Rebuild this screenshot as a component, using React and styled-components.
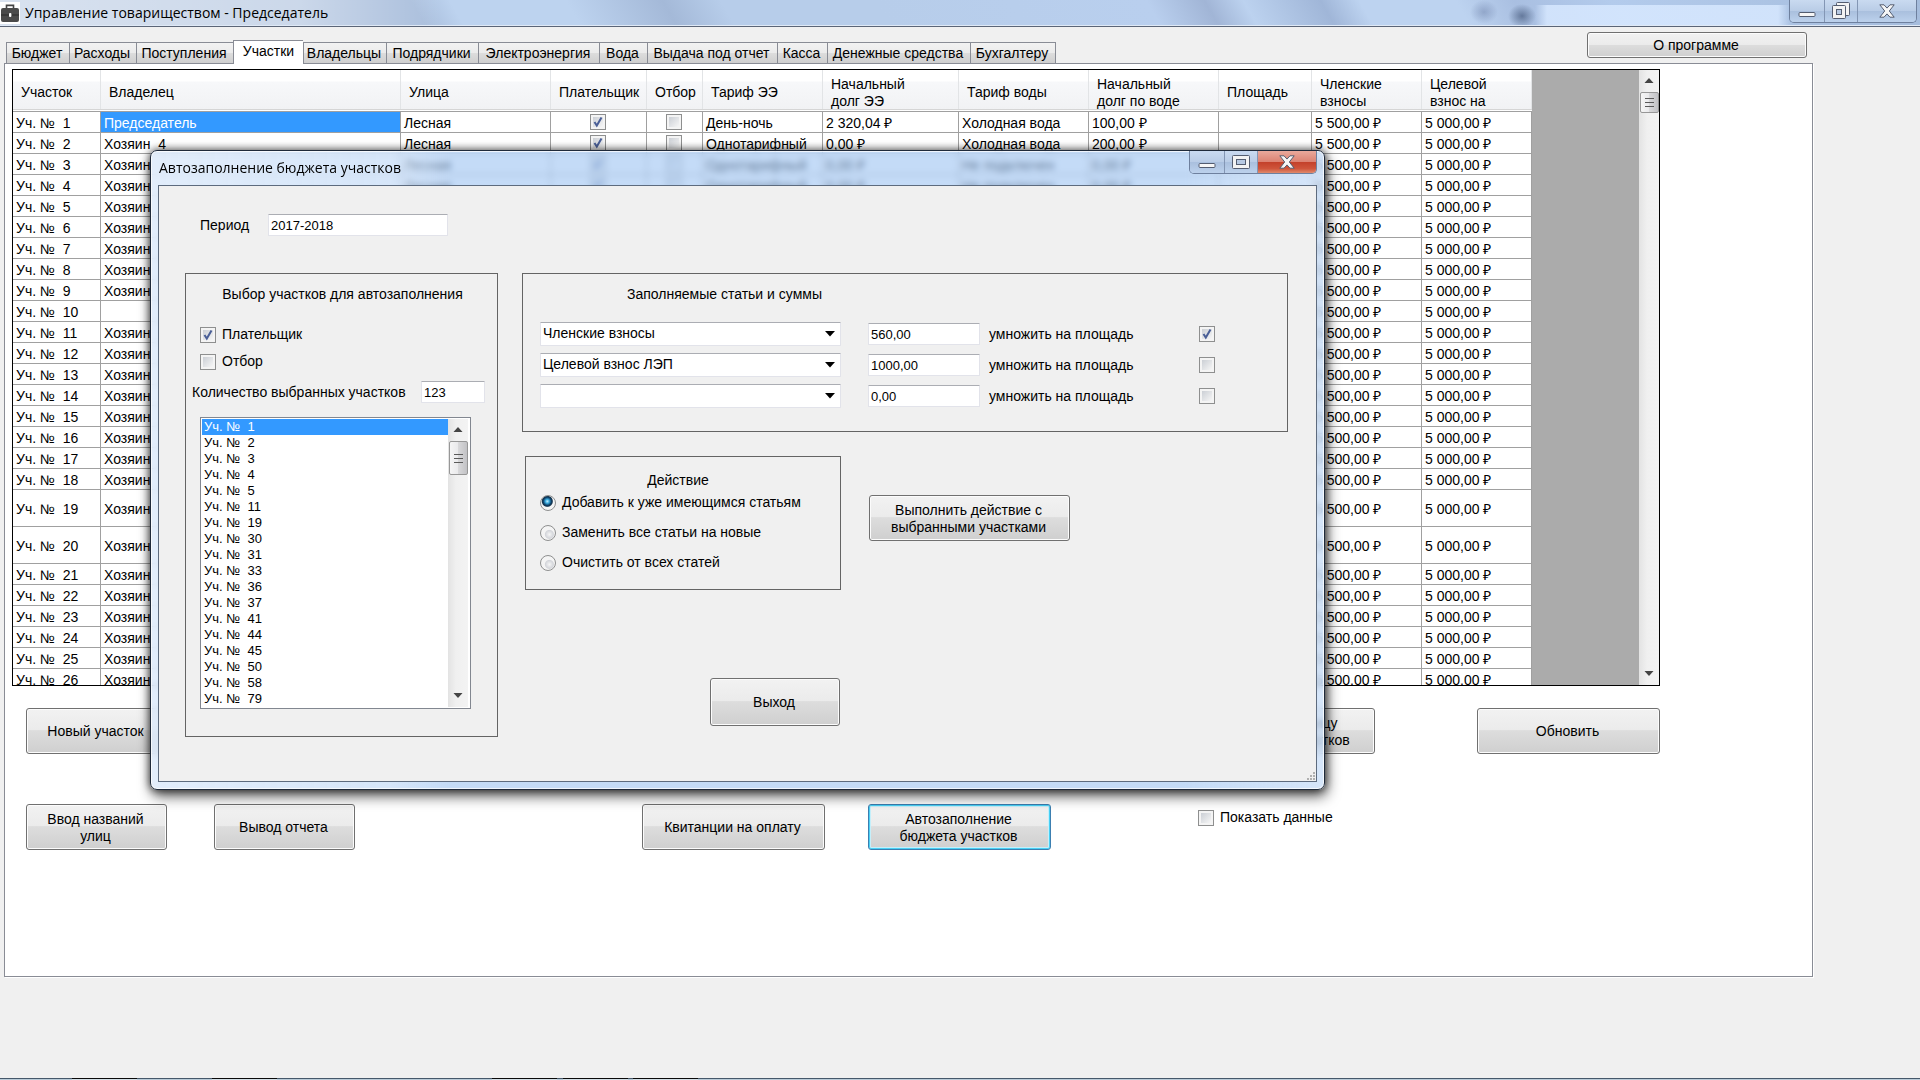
import React from "react";
import styled, { createGlobalStyle, css } from "styled-components";

const ui = '"Liberation Sans", Arial, sans-serif';
const caption = '"Open Sans", "Noto Sans", sans-serif';

const Global = createGlobalStyle`
  *, *::before, *::after { box-sizing: border-box; }
  html, body, #root { height: 100%; }
  body { margin: 0; overflow: hidden; background: #f0f0f0; color: #000; font: 14px/17px ${ui}; }
  button, input, select { font: inherit; color: inherit; margin: 0; }
`;

const Screen = styled.div`
  display: flex;
  flex-direction: column;
  min-height: 100vh;
  position: relative;
`;

const TitleBar = styled.header`
  display: flex;
  align-items: center;
  justify-content: space-between;
  height: 27px;
  border-bottom: 1px solid #5b6577;
  box-shadow: inset 0 -1px 0 #dfe9f6;
  background:
    radial-gradient(ellipse 14px 12px at right 398px top 16px, rgba(55,75,110,.6), transparent),
    radial-gradient(ellipse 14px 12px at right 436px top 12px, rgba(110,130,170,.5), transparent),
    linear-gradient(90deg, transparent, rgba(215,232,255,.85) 12px calc(100% - 12px), transparent) right 130px top 5px / 255px 20px no-repeat,
    linear-gradient(90deg, rgba(255,255,255,.55) 0, rgba(255,255,255,.4) 300px, transparent 440px),
    linear-gradient(60deg, #a9bedc 0 22%, #bdd3ef 24% 30%, #a4b9d8 35%, #b7cdea 38% 46%, #b9cfee 60%, #a1b5d6 63%, #bcd2ef 65%, #a0b6d8 69%, #bdd3f0 71% 76%, #a9bfe1 79%, #b3cbec 84%, #a5bcdc 100%);
`;

const Caption = styled.div`
  display: flex;
  align-items: center;
  gap: 5px;
  height: 26px;
  font: 14px/20px ${caption};
  white-space: nowrap;
`;

const CaptionButtons = styled.div`
  display: flex;
  align-self: flex-start;
  height: 23px;
  margin-right: ${(p) => (p.$dialog ? 0 : 3)}px;
  border: 1px solid #6e809e;
  border-top: 0;
  border-radius: 0 0 5px 5px;
  overflow: hidden;
`;

const CaptionButton = styled.button`
  display: grid;
  place-items: center;
  width: ${(p) => p.$w}px;
  padding: 0;
  border: 0;
  border-right: 1px solid #8396b4;
  background: linear-gradient(#c9daf0, #b9cce6 50%, #a9bfdd 50%, #bcd1ec);
  &:last-child { border-right: 0; }
  ${(p) => p.$danger && css`background: linear-gradient(#e9a99c, #dc8373 48%, #c3402a 50%, #cf553b 80%, #e08a6c);`}
`;

const Toolbar = styled.div`
  display: flex;
  justify-content: space-between;
  align-items: flex-end;
  height: 36px;
  padding-left: 6px;
`;

const Tabs = styled.div`
  display: flex;
  align-items: flex-end;
`;

const Tab = styled.button`
  position: relative;
  width: ${(p) => p.$w}px;
  height: 21px;
  padding: 1px 2px 0 0;
  border: 1px solid #898c95;
  border-width: 1px 0 0 1px;
  background: linear-gradient(#f2f2f2, #ebebeb 50%, #dddddd 50%, #cfcfcf);
  white-space: nowrap;
  &:last-child { border-right-width: 1px; }
  ${(p) => p.$active && css`
    height: 24px;
    margin-bottom: -1px;
    padding: 0 0 2px;
    background: #fff;
  `}
`;

const aero = css`
  border: 1px solid #707070;
  border-radius: 3px;
  background: linear-gradient(#f2f2f2, #ebebeb 48%, #dddddd 49%, #cfcfcf);
  box-shadow: inset 0 0 0 1px #fcfcfc;
`;

const Button = styled.button`
  ${aero}
  flex: none;
  width: ${(p) => p.$w}px;
  height: ${(p) => p.$h || 46}px;
  padding: 1px 2px 0 0;
  white-space: pre-line;
  ${(p) => p.$focused && css`
    border-color: #3c7fb1;
    box-shadow: inset 0 0 0 1px #48d0f5, inset 0 0 0 2px #c5effa;
  `}
`;

const About = styled.div`
  align-self: flex-start;
  padding-top: 5px;
  margin-right: 113px;
`;

const Page = styled.main`
  flex: 1;
  margin: 0 107px 101px 4px;
  padding: 5px 152px 0 7px;
  background: #fff;
  border: 1px solid #898c95;
  box-shadow: 1px 1px 0 #fff;
`;

const Taskbar = styled.footer`
  height: 2px;
  border-top: 1px solid #46586a;
  background: #b9cbd8;
  display: flex;
`;

const TaskItem = styled.span`
  width: 65px;
  height: 2px;
  margin-top: -1px;
  margin-left: ${(p) => p.$gap}px;
  background: linear-gradient(#0a0a0a 50%, #d3dfe6 50%);
`;

const GridBox = styled.div`
  display: flex;
  height: 617px;
  border: 1px solid #000;
  background: #ababab;
`;

const GridView = styled.div`
  flex: 1;
  overflow: hidden;
`;

const Grid = styled.table`
  width: 1519px;
  table-layout: fixed;
  border-collapse: separate;
  border-spacing: 0;
  background: #fff;
`;

const Th = styled.th`
  height: 42px;
  padding: 4px 6px 0 8px;
  border-bottom: 1px solid #a0a0a0;
  background:
    linear-gradient(#e2e4e6, #e2e4e6) right top / 1px 39px no-repeat,
    linear-gradient(#d5d5d5, #d5d5d5) left bottom 1px / 100% 1px no-repeat,
    linear-gradient(#fff 0 11px, #f7f8fa 12px, #f1f2f4 39px, #fff 40px);
  font-weight: 400;
  text-align: left;
  white-space: pre-line;
`;

const Td = styled.td`
  height: ${(p) => (p.$tall ? 37 : 21)}px;
  padding: 3px 3px 0;
  border: 1px solid #a0a0a0;
  border-width: 0 1px 1px 0;
  white-space: pre;
  overflow: hidden;
  ${(p) => p.$center && css`padding: 1px 4px 0 2px; text-align: center;`}
  ${(p) => p.$selected && css`background: #3399ff; color: #fff;`}
`;

const Check = styled.input.attrs({ type: "checkbox" })`
  appearance: none;
  flex: none;
  width: 16px;
  height: 16px;
  vertical-align: top;
  border: 1px solid #8e8f8f;
  background:
    linear-gradient(135deg, #cbcfd5, #f6f6f6) center / 10px 10px no-repeat,
    #f4f4f4;
  &:checked {
    background:
      url("data:image/svg+xml,%3Csvg xmlns='http://www.w3.org/2000/svg' viewBox='0 0 14 14'%3E%3Cpath d='M3.5 7l2.3 3.6L10.5 2.6' fill='none' stroke='%234a5f97' stroke-width='2'/%3E%3C/svg%3E") center / 14px 14px no-repeat,
      linear-gradient(135deg, #cbcfd5, #f6f6f6) center / 10px 10px no-repeat,
      #f4f4f4;
  }
`;

const Radio = styled.input.attrs({ type: "radio" })`
  appearance: none;
  flex: none;
  width: 16px;
  height: 16px;
  border: 1px solid #8e8f8f;
  border-radius: 50%;
  background: radial-gradient(circle at 60% 60%, #f6f6f6 0, #d3d5da 4px, #f4f4f4 5px);
  &:checked {
    background: radial-gradient(circle at 45% 38%, #c5f0ff 0, #38a8dc 2px, #0e3f66 4px, #16344d 5px, #f4f4f4 6px);
  }
`;

const CheckLabel = styled.label`
  display: flex;
  align-items: center;
  gap: 6px;
`;

const Scroll = styled.div`
  flex: none;
  display: flex;
  flex-direction: column;
  align-items: center;
  width: 20px;
  padding: 1px 0;
  background: linear-gradient(90deg, #e3e3e3, #f0f0f0 40%, #f3f3f3);
  svg { flex: none; }
`;

const Thumb = styled.div`
  display: grid;
  place-items: center;
  width: 19px;
  height: ${(p) => p.$h}px;
  margin: 1px 0 auto;
  border: 1px solid #979797;
  border-radius: 2px;
  background: linear-gradient(90deg, #f5f5f5, #e9e9eb 49%, #d8d8da 50%, #c2c2c5);
`;

const Actions = styled.div`
  display: flex;
  justify-content: space-between;
  align-items: flex-start;
  margin: 22px 0 0 14px;
`;

const Group = styled.div`
  display: flex;
  gap: ${(p) => p.$gap}px;
`;

const Lower = styled.div`
  display: flex;
  align-items: flex-start;
  margin: 50px 0 0 14px;
`;

const Space = styled.div`
  width: ${(p) => p.$w}px;
`;

const ShowData = styled.div`
  padding-top: 5px;
`;

const Dialog = styled.section`
  position: absolute;
  left: 150px;
  top: 150px;
  width: 1175px;
  height: 640px;
  display: flex;
  flex-direction: column;
  padding: 0 7px;
  padding-bottom: 7px;
  border: 1px solid #1f2a3a;
  border-radius: 7px;
  background:
    linear-gradient(90deg, rgba(255,255,255,.5), rgba(255,255,255,.3) 240px, transparent 300px, transparent 88%, rgba(255,255,255,.3)),
    rgba(160, 197, 242, .62);
  backdrop-filter: blur(3px);
  box-shadow: inset 0 0 0 1px rgba(255,255,255,.75), 0 0 8px rgba(0,0,0,.7), 2px 6px 14px rgba(0,0,0,.65);
`;

const DialogBar = styled.div`
  display: flex;
  justify-content: space-between;
  align-items: center;
  height: 34px;
  padding-left: 1px;
`;

const Client = styled.div`
  flex: 1;
  border: 1px solid #5d6b7e;
  background: #f0f0f0;
  padding: 28px 28px 0 26px;
  position: relative;
`;

const Grip = styled.svg`
  position: absolute;
  right: 0;
  bottom: 0;
`;

const Period = styled.label`
  display: flex;
  align-items: center;
  gap: 19px;
  padding-left: 15px;
  margin-bottom: 37px;
`;

const Text = styled.input.attrs({ type: "text" })`
  width: ${(p) => p.$w}px;
  height: 22px;
  padding: 0 2px;
  border: 1px solid #e2e3ea;
  border-top-color: #abadb3;
  border-radius: 1px;
  background: #fff;
  font-size: ${(p) => p.$size || 13}px;
`;

const Columns = styled.div`
  display: flex;
  gap: 24px;
`;

const Panel = styled.div`
  border: 1px solid #646464;
`;

const PickPanel = styled(Panel)`
  width: 313px;
  height: 464px;
  padding: 12px 12px 0 14px;
  display: flex;
  flex-direction: column;
`;

const PanelTitle = styled.div`
  text-align: center;
`;

const Checks = styled.div`
  display: flex;
  flex-direction: column;
  gap: 10px;
  margin: 23px 0 11px;
`;

const Count = styled.label`
  display: flex;
  align-items: center;
  justify-content: space-between;
  margin-left: -8px;
  white-space: nowrap;
`;

const List = styled.div`
  display: flex;
  width: 271px;
  height: 292px;
  margin-top: 14px;
  padding: 1px 2px 1px 1px;
  border: 1px solid #828790;
  background: #fff;
`;

const Items = styled.ul`
  flex: 1;
  margin: 0;
  padding: 0;
  list-style: none;
  font-size: 13px;
  line-height: 16px;
  overflow: hidden;
`;

const Item = styled.li`
  padding-left: 2px;
  white-space: pre;
  ${(p) => p.$selected && css`background: #3399ff; color: #fff;`}
`;

const Right = styled.div`
  flex: 1;
`;

const SumPanel = styled(Panel)`
  height: 159px;
  padding: 12px 72px 0 17px;
`;

const SumTitle = styled.div`
  padding-left: 87px;
  margin-bottom: 19px;
`;

const SumRow = styled.div`
  display: grid;
  grid-template-columns: 301px 27px 112px 9px 1fr 16px;
  align-items: center;
  height: 24px;
  margin-bottom: 7px;
  > :nth-child(2) { grid-column: 3; }
  > :nth-child(3) { grid-column: 5; }
  > :nth-child(4) { grid-column: 6; }
`;

const Select = styled.select`
  appearance: none;
  width: 100%;
  height: 24px;
  padding: 0 20px 2px 2px;
  border: 1px solid #e2e3ea;
  border-top-color: #abadb3;
  border-radius: 1px;
  background:
    url("data:image/svg+xml,%3Csvg xmlns='http://www.w3.org/2000/svg' viewBox='0 0 10 6'%3E%3Cpath d='M0 0h10L5 5.5z'/%3E%3C/svg%3E") right 5px center / 10px 6px no-repeat,
    #fff;
`;

const Middle = styled.div`
  display: flex;
  align-items: flex-start;
  gap: 28px;
  margin: 24px 0 0 3px;
`;

const ActionPanel = styled(Panel)`
  width: 316px;
  height: 134px;
  padding: 15px 14px 0;
`;

const ActionTitle = styled(PanelTitle)`
  padding-right: 10px;
  margin-bottom: 5px;
`;

const RadioLabel = styled(CheckLabel)`
  height: 17px;
  margin-bottom: 13px;
`;

const RunWrap = styled.div`
  padding-top: 39px;
`;

const ExitWrap = styled.div`
  margin: 88px 0 0 188px;
`;

const Briefcase = () => (
  <svg width="20" height="22" viewBox="0 0 20 22" aria-hidden="true">
    <path fill="#fff" d="M0 0h20v22H0z" />
    <path fill="none" stroke="#444" strokeWidth="1.6" d="M6.5 6V3.4h7V6" />
    <rect x="1" y="6" width="18" height="14" rx="2" fill="#4a4a4a" />
    <path fill="#2b2b2b" d="M1 12.5h18v1H1z" />
    <rect x="9" y="11" width="2.4" height="4" rx="1" fill="#fff" />
  </svg>
);

const MinIcon = () => (
  <svg width="18" height="14" viewBox="0 0 18 14" aria-hidden="true">
    <rect x="1" y="8.5" width="16" height="4" rx="1" fill="#f6f6f6" stroke="#545d70" />
  </svg>
);

const MaxIcon = () => (
  <svg width="18" height="16" viewBox="0 0 18 16" aria-hidden="true">
    <rect x=".5" y="1.5" width="17" height="13" rx="1" fill="#f3f3f3" stroke="#545d70" />
    <rect x="4.5" y="5.5" width="9" height="5" fill="#b7c9e2" stroke="#545d70" />
  </svg>
);

const RestoreIcon = () => (
  <svg width="18" height="18" viewBox="0 0 18 18" aria-hidden="true">
    <rect x="4.5" y=".5" width="13" height="13" rx="1" fill="#f3f3f3" stroke="#545d70" />
    <rect x=".5" y="3.5" width="13" height="13" rx="1" fill="#f3f3f3" stroke="#545d70" />
    <rect x="4.5" y="7.5" width="5" height="5" fill="#b7c9e2" stroke="#545d70" />
  </svg>
);

const CloseIcon = () => (
  <svg width="16" height="14" viewBox="0 0 16 14" aria-hidden="true">
    <path d="M.8.8H5L8 4.1 11 .8h4.2L10.3 7l4.9 6.2H11L8 9.900l-3 3.300H.8L5.700 7z" fill="#f6f6f6" stroke="#545d70" strokeLinejoin="round" />
  </svg>
);

const Arrow = ({ down }) => (
  <svg width="20" height="20" viewBox="0 0 20 20" aria-hidden="true">
    <path d={down ? "M5.5 7h9L10 12z" : "M5.5 12h9L10 7z"} fill="#444" />
  </svg>
);

const ThumbLines = () => (
  <svg width="9" height="11" viewBox="0 0 9 11" aria-hidden="true">
    <path d="M0 1.5h9M0 5.5h9M0 9.5h9" stroke="#5a5a5a" />
  </svg>
);

const ScrollBar = ({ thumb }) => (
  <Scroll aria-hidden="true">
    <Arrow />
    <Thumb $h={thumb}><ThumbLines /></Thumb>
    <Arrow down />
  </Scroll>
);

const WindowButtons = ({ dialog }) => (
  <CaptionButtons $dialog={dialog}>
    <CaptionButton $w={35} aria-label="Свернуть"><MinIcon /></CaptionButton>
    <CaptionButton $w={33} aria-label="Развернуть">{dialog ? <MaxIcon /> : <RestoreIcon />}</CaptionButton>
    <CaptionButton $w={58} $danger={dialog} aria-label="Закрыть"><CloseIcon /></CaptionButton>
  </CaptionButtons>
);

const tabs = [
  ["Бюджет", 63], ["Расходы", 67], ["Поступления", 97], ["Участки", 70], ["Владельцы", 83],
  ["Подрядчики", 92], ["Электроэнергия", 121], ["Вода", 48], ["Выдача под отчет", 130],
  ["Касса", 50], ["Денежные средства", 143], ["Бухгалтеру", 86],
];

const columns = [
  ["Участок", 88], ["Владелец", 300], ["Улица", 150], ["Плательщик", 96], ["Отбор", 56],
  ["Тариф ЭЭ", 120], ["Начальный\nдолг ЭЭ", 136], ["Тариф воды", 130], ["Начальный\nдолг по воде", 130],
  ["Площадь", 93], ["Членские\nвзносы", 110], ["Целевой\nвзнос на", 110],
];

const rows = Array.from({ length: 26 }, (_, i) => {
  const n = i + 1;
  const owner = n === 1 ? "Председатель" : n === 10 ? "" : n === 2 ? "Хозяин  4" : "Хозяин";
  return {
    n,
    owner,
    tariff: n === 1 ? "День-ночь" : "Однотарифный",
    debt: n === 1 ? "2 320,04 ₽" : "0,00 ₽",
    water: n < 3 ? "Холодная вода" : "Не подключен",
    waterDebt: n === 1 ? "100,00 ₽" : n === 2 ? "200,00 ₽" : "0,00 ₽",
  };
});

const picked = [1, 2, 3, 4, 5, 11, 19, 30, 31, 33, 36, 37, 41, 44, 45, 50, 58, 79];

const sums = [
  ["Членские взносы", "560,00", true],
  ["Целевой взнос ЛЭП", "1000,00", false],
  ["", "0,00", false],
];

const modes = ["Добавить к уже имеющимся статьям", "Заменить все статьи на новые", "Очистить от всех статей"];

function PlotsGrid() {
  return (
    <GridBox>
      <GridView>
        <Grid>
          <colgroup>{columns.map(([name, w]) => <col key={name} width={w} />)}</colgroup>
          <thead>
            <tr>{columns.map(([name]) => <Th key={name}>{name}</Th>)}</tr>
          </thead>
          <tbody>
            {rows.map((r) => (
              <tr key={r.n}>
                <Td $tall={r.n === 19 || r.n === 20}>{`Уч. №  ${r.n}`}</Td>
                <Td $selected={r.n === 1}>{r.owner}</Td>
                <Td>Лесная</Td>
                <Td $center><Check defaultChecked aria-label="Плательщик" /></Td>
                <Td $center><Check aria-label="Отбор" /></Td>
                <Td>{r.tariff}</Td>
                <Td>{r.debt}</Td>
                <Td>{r.water}</Td>
                <Td>{r.waterDebt}</Td>
                <Td />
                <Td>5 500,00 ₽</Td>
                <Td>5 000,00 ₽</Td>
              </tr>
            ))}
          </tbody>
        </Grid>
      </GridView>
      <ScrollBar thumb={21} />
    </GridBox>
  );
}

function BudgetDialog() {
  return (
    <Dialog role="dialog" aria-labelledby="dialog-title">
      <DialogBar>
        <Caption id="dialog-title">Автозаполнение бюджета участков</Caption>
        <WindowButtons dialog />
      </DialogBar>
      <Client>
        <Period>Период<Text $w={180} defaultValue="2017-2018" /></Period>
        <Columns>
          <PickPanel>
            <PanelTitle>Выбор участков для автозаполнения</PanelTitle>
            <Checks>
              <CheckLabel><Check defaultChecked />Плательщик</CheckLabel>
              <CheckLabel><Check />Отбор</CheckLabel>
            </Checks>
            <Count>Количество выбранных участков<Text $w={64} defaultValue="123" /></Count>
            <List>
              <Items>
                {picked.map((n) => <Item key={n} $selected={n === 1}>{`Уч. №  ${n}`}</Item>)}
              </Items>
              <ScrollBar thumb={34} />
            </List>
          </PickPanel>
          <Right>
            <SumPanel>
              <SumTitle>Заполняемые статьи и суммы</SumTitle>
              {sums.map(([name, sum, on], i) => (
                <SumRow key={i}>
                  <Select aria-label="Статья" defaultValue={name}><option>{name}</option></Select>
                  <Text $w={112} defaultValue={sum} aria-label="Сумма" />
                  <label htmlFor={`area-${i}`}>умножить на площадь</label>
                  <Check id={`area-${i}`} defaultChecked={on} />
                </SumRow>
              ))}
            </SumPanel>
            <Middle>
              <ActionPanel>
                <ActionTitle>Действие</ActionTitle>
                {modes.map((m, i) => (
                  <RadioLabel key={m}><Radio name="mode" defaultChecked={i === 0} />{m}</RadioLabel>
                ))}
              </ActionPanel>
              <RunWrap><Button $w={201}>{"Выполнить действие с\nвыбранными участками"}</Button></RunWrap>
            </Middle>
            <ExitWrap><Button $w={130} $h={48}>Выход</Button></ExitWrap>
          </Right>
        </Columns>
        <Grip width="10" height="10" viewBox="0 0 10 10" aria-hidden="true">
          <path fill="#b0b0b0" d="M7 1h2v2H7zM4 4h2v2H4zM7 4h2v2H7zM1 7h2v2H1zM4 7h2v2H4zM7 7h2v2H7z" />
        </Grip>
      </Client>
    </Dialog>
  );
}

export default function App() {
  return (
    <Screen>
      <Global />
      <TitleBar>
        <Caption><Briefcase />Управление товариществом - Председатель</Caption>
        <WindowButtons />
      </TitleBar>
      <Toolbar>
        <Tabs role="tablist">
          {tabs.map(([name, w]) => (
            <Tab key={name} role="tab" $w={w} $active={name === "Участки"} aria-selected={name === "Участки"}>{name}</Tab>
          ))}
        </Tabs>
        <About><Button $w={220} $h={26}>О программе</Button></About>
      </Toolbar>
      <Page>
        <PlotsGrid />
        <Actions>
          <Button $w={141}>Новый участок</Button>
          <Group $gap={102}>
            <Button $w={183}>{"Вывод в таблицу\nвыбранных участков"}</Button>
            <Button $w={183}>Обновить</Button>
          </Group>
        </Actions>
        <Lower>
          <Button $w={141}>{"Ввод названий\nулиц"}</Button>
          <Space $w={47} />
          <Button $w={141}>Вывод отчета</Button>
          <Space $w={287} />
          <Button $w={183}>Квитанции на оплату</Button>
          <Space $w={43} />
          <Button $w={183} $focused>{"Автозаполнение\nбюджета участков"}</Button>
          <Space $w={147} />
          <ShowData><CheckLabel><Check />Показать данные</CheckLabel></ShowData>
        </Lower>
      </Page>
      <Taskbar>
        <TaskItem $gap={72} /><TaskItem $gap={75} /><TaskItem $gap={215} /><TaskItem $gap={6} /><TaskItem $gap={5} />
      </Taskbar>
      <BudgetDialog />
    </Screen>
  );
}
